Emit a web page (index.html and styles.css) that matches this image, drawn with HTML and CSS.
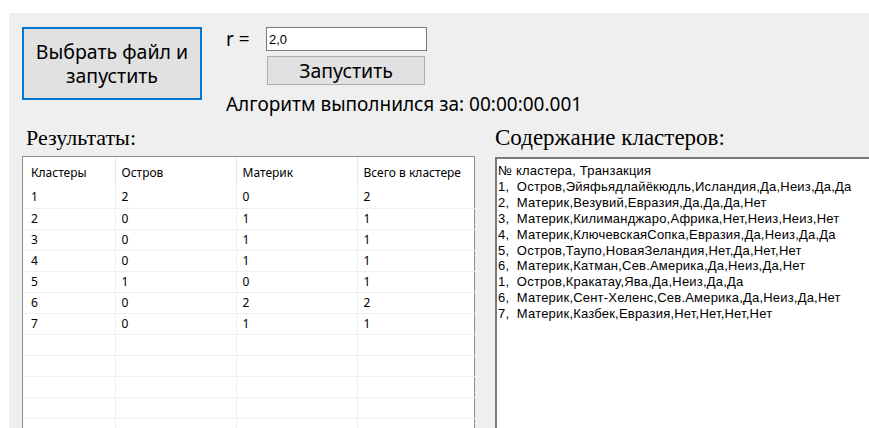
FILE: index.html
```html
<!DOCTYPE html>
<html lang="ru">
<head>
<meta charset="utf-8">
<title>Кластеризация</title>
<link rel="stylesheet" href="styles.css">
</head>
<body>
<div class="window">
  <div class="top">
    <button class="btn btn-main"><span class="btn-line">Выбрать файл и</span><span class="btn-line">запустить</span></button>
    <div class="controls">
      <div class="param">
        <span class="param-label">r =</span>
        <input class="param-input" type="text" value="2,0">
      </div>
      <button class="btn btn-run">Запустить</button>
      <div class="elapsed">Алгоритм выполнился за: 00:00:00.001</div>
    </div>
  </div>
  <div class="bottom">
    <section class="panel panel-results">
      <h2 class="caption">Результаты:</h2>
      <div class="grid">
        <table class="grid-table">
          <thead>
            <tr><th>Кластеры</th><th>Остров</th><th>Материк</th><th>Всего в кластере</th></tr>
          </thead>
          <tbody>
            <tr><td>1</td><td>2</td><td>0</td><td>2</td></tr>
            <tr><td>2</td><td>0</td><td>1</td><td>1</td></tr>
            <tr><td>3</td><td>0</td><td>1</td><td>1</td></tr>
            <tr><td>4</td><td>0</td><td>1</td><td>1</td></tr>
            <tr><td>5</td><td>1</td><td>0</td><td>1</td></tr>
            <tr><td>6</td><td>0</td><td>2</td><td>2</td></tr>
            <tr><td>7</td><td>0</td><td>1</td><td>1</td></tr>
            <tr><td></td><td></td><td></td><td></td></tr>
            <tr><td></td><td></td><td></td><td></td></tr>
            <tr><td></td><td></td><td></td><td></td></tr>
            <tr><td></td><td></td><td></td><td></td></tr>
            <tr><td></td><td></td><td></td><td></td></tr>
          </tbody>
        </table>
      </div>
    </section>
    <section class="panel panel-clusters">
      <h2 class="caption">Содержание кластеров:</h2>
      <div class="memo">
        <div>№ кластера, Транзакция</div>
        <div>1,&nbsp; Остров,Эйяфьядлайёкюдль,Исландия,Да,Неиз,Да,Да</div>
        <div>2,&nbsp; Материк,Везувий,Евразия,Да,Да,Да,Нет</div>
        <div>3,&nbsp; Материк,Килиманджаро,Африка,Нет,Неиз,Неиз,Нет</div>
        <div>4,&nbsp; Материк,КлючевскаяСопка,Евразия,Да,Неиз,Да,Да</div>
        <div>5,&nbsp; Остров,Таупо,НоваяЗеландия,Нет,Да,Нет,Нет</div>
        <div>6,&nbsp; Материк,Катман,Сев.Америка,Да,Неиз,Да,Нет</div>
        <div>1,&nbsp; Остров,Кракатау,Ява,Да,Неиз,Да,Да</div>
        <div>6,&nbsp; Материк,Сент-Хеленс,Сев.Америка,Да,Неиз,Да,Нет</div>
        <div>7,&nbsp; Материк,Казбек,Евразия,Нет,Нет,Нет,Нет</div>
      </div>
    </section>
  </div>
</div>
</body>
</html>
```

FILE: styles.css
```css
html, body {
  margin: 0;
  padding: 0;
  background: #ffffff;
  overflow: hidden;
}

.window {
  margin: 13px 0 0 9px;
  height: 415px;
  background: #efefef;
  overflow: hidden;
  font-family: "Noto Sans", "Open Sans", sans-serif;
  color: #000;
}

/* top strip: big button and parameter controls */
.top {
  display: flex;
  gap: 24px;
  padding: 14px 0 0 13px;
}

.btn {
  font-family: inherit;
  color: #000;
  background: #e1e1e1;
  border: 1px solid #adadad;
  padding: 0;
  margin: 0;
}

.btn-main {
  width: 180px;
  height: 73px;
  border: 2px solid #0078d7;
  font-size: 19.5px;
  display: flex;
  flex-direction: column;
  align-items: center;
  justify-content: center;
}

.btn-line {
  display: block;
  height: 24px;
  line-height: 24px;
  overflow: visible;
}

.controls {
  display: flex;
  flex-direction: column;
}

.param {
  display: flex;
  align-items: center;
  height: 24px;
}

.param-label {
  width: 40px;
  font-size: 19px;
  line-height: 24px;
  margin-top: -1px;
}

.param-input {
  box-sizing: border-box;
  width: 161px;
  height: 24px;
  border: 1px solid #7a7a7a;
  background: #fff;
  padding: 1px 2px 0;
  font-family: "Liberation Sans", sans-serif;
  font-size: 13px;
  outline: none;
}

.btn-run {
  width: 158px;
  height: 29px;
  margin: 5px 0 0 41px;
  font-size: 19.5px;
  line-height: 27px;
}

.elapsed {
  font-size: 19px;
  line-height: 24px;
  margin-top: 7px;
  white-space: nowrap;
}

/* lower area: results grid and clusters memo */
.bottom {
  display: grid;
  grid-template-columns: 453px 1fr;
  gap: 20px;
  padding: 10px 0 0 13px;
}

.caption {
  margin: 0 0 0 4px;
  font-family: "Liberation Serif", serif;
  font-weight: normal;
  font-size: 22px;
  line-height: 24px;
  height: 30px;
}

.panel-clusters .caption {
  margin-left: 0;
  font-size: 23px;
}

.grid {
  background: #fff;
  border: 1px solid #8c8c8c;
  height: 400px;
}

.grid-table {
  border-collapse: collapse;
  table-layout: fixed;
  width: 452px;
  font-family: "Noto Sans", sans-serif;
  font-size: 12px;
}

.grid-table th,
.grid-table td {
  box-sizing: border-box;
}

.grid-table th:nth-child(1), .grid-table td:nth-child(1) { width: 92px; }
.grid-table th:nth-child(2), .grid-table td:nth-child(2) { width: 121px; }
.grid-table th:nth-child(3), .grid-table td:nth-child(3) { width: 121px; }

.grid-table th {
  height: 30px;
  padding: 0 0 0 6px;
  text-align: left;
  font-weight: normal;
  border-right: 1px solid #e8e8e8;
  white-space: nowrap;
  overflow: hidden;
}

.grid-table td {
  height: 21px;
  padding: 0 0 0 6px;
  border-right: 1px solid #f0f0f0;
  border-bottom: 1px solid #f0f0f0;
  line-height: 20px;
}

.grid-table th:first-child,
.grid-table td:first-child {
  padding-left: 8px;
}

.grid-table th:last-child,
.grid-table td:last-child {
  border-right: none;
}

.panel-clusters {
  min-width: 0;
}

.memo {
  margin-top: 1px;
  width: 400px;
  height: 400px;
  background: #fff;
  border-top: 2px solid #7a7a7a;
  border-left: 2px solid #7a7a7a;
  padding: 4px 0 0 1px;
  font-family: "Liberation Sans", sans-serif;
  font-size: 13px;
  letter-spacing: 0.2px;
  line-height: 15.9px;
  white-space: nowrap;
}
```
